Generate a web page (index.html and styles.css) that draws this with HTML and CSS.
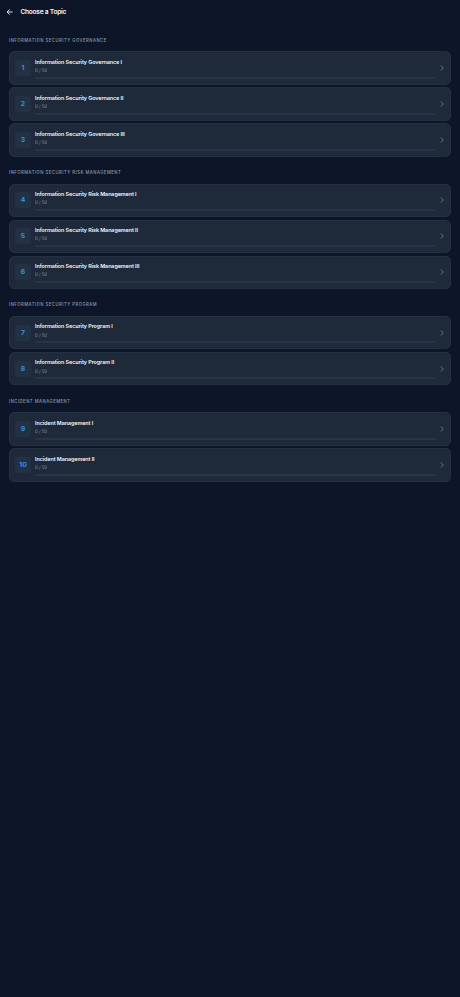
FILE: index.html
```html
<!DOCTYPE html>
<html lang="en">
<head>
<meta charset="UTF-8">
<meta name="viewport" content="width=device-width, initial-scale=1.0">
<title>Choose a Topic</title>
<link rel="stylesheet" href="styles.css">
</head>
<body>

<header class="header">
  <svg class="back" viewBox="0 0 8 8"><path d="M6.6 4H1.2M3.7 1.4L1.1 4l2.6 2.6"/></svg>
  <h1>Choose a Topic</h1>
</header>

<main id="topics"></main>

<script>
  var sections = [
    { name: 'Information Security Governance', count: 3 },
    { name: 'Information Security Risk Management', count: 3 },
    { name: 'Information Security Program', count: 2 },
    { name: 'Incident Management', count: 2 }
  ];
  var numerals = ['I', 'II', 'III'];
  var number = 1;
  var html = '';

  sections.forEach(function(section) {
    html += '<section class="section"><h2>' + section.name + '</h2><div class="list">';
    for (var i = 0; i < section.count; i++) {
      html += '<div class="card">' +
        '<div class="number">' + number + '</div>' +
        '<div class="info">' +
          '<h3>' + section.name + ' ' + numerals[i] + '</h3>' +
          '<p>0 / 50</p>' +
          '<div class="track"></div>' +
        '</div>' +
        '<svg class="chevron" viewBox="0 0 4 6"><path d="M.8 .5L3.3 3 .8 5.5"/></svg>' +
      '</div>';
      number++;
    }
    html += '</div></section>';
  });

  document.getElementById('topics').innerHTML = html;
</script>

</body>
</html>
```
FILE: styles.css
```css
* {
  box-sizing: border-box;
  margin: 0;
  padding: 0;
}
body {
  min-height: 100vh;
  background: #0d1628;
  color: #f4f7fb;
  font-family: Inter, "Liberation Sans", sans-serif;
}
.header {
  display: flex;
  align-items: center;
  height: 24px;
  padding-left: 6px;
}
.header h1 {
  margin-left: 6.4px;
  font-size: 6.6px;
  font-weight: 600;
  line-height: 10px;
  letter-spacing: -0.24px;
}
.back {
  width: 8px;
  height: 8px;
  fill: none;
  stroke: #f4f7fb;
  stroke-width: 0.9;
}
#topics {
  padding: 12.3px 9px 0;
}
.section {
  margin-bottom: 11.8px;
}
.section h2 {
  height: 15px;
  padding-top: 0.5px;
  color: #8e9bae;
  font-size: 4.2px;
  font-weight: 500;
  line-height: 8px;
  letter-spacing: 0.51px;
  text-transform: uppercase;
}
.list {
  display: flex;
  flex-direction: column;
  gap: 2.5px;
}
.card {
  display: flex;
  align-items: center;
  height: 33.5px;
  padding: 0 6.5px 0 5px;
  border: 1px solid #243144;
  border-radius: 5px;
  background: #1e293a;
}
.number {
  width: 16px;
  height: 16px;
  border-radius: 3px;
  background: #233145;
  color: #3292e8;
  font-size: 6.8px;
  font-weight: 700;
  line-height: 16px;
  text-align: center;
}
.info {
  flex: 1;
  margin: 0 4px 0 4px;
}
.info h3 {
  padding-top: 0.4px;
  font-size: 5.4px;
  font-weight: 600;
  line-height: 8px;
  letter-spacing: -0.07px;
}
.info p {
  margin-top: 1.5px;
  color: #8996a9;
  font-size: 4.3px;
  line-height: 7px;
}
.track {
  height: 2px;
  margin-top: 2.6px;
  border-radius: 1px;
  background: #283548;
}
.chevron {
  width: 4px;
  height: 6px;
  fill: none;
  stroke: #7c899b;
  stroke-width: 0.8;
}
```
